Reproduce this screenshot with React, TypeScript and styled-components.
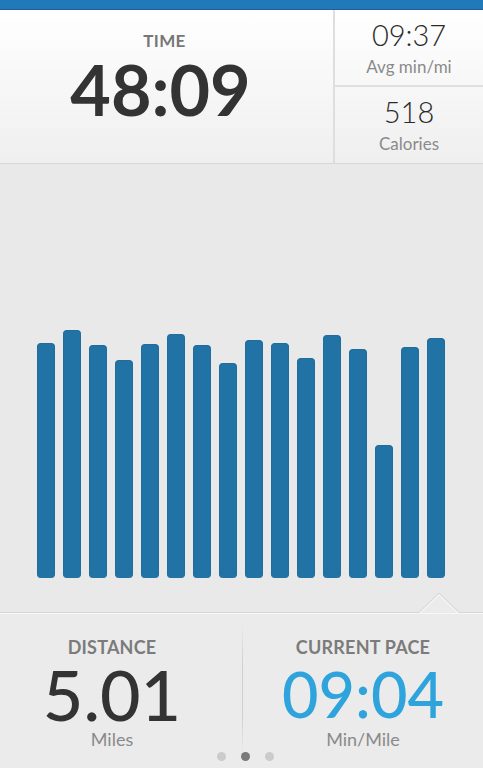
import styled, { createGlobalStyle } from "styled-components"

const GlobalStyle = createGlobalStyle`
    html, body {
        margin: 0;
        padding: 0;
        background: #e9e9e9;
        font-family: Lato, "Open Sans", sans-serif;
    }
    #root {
        width: 483px;
        height: 768px;
        overflow: hidden;
    }
`

const bars = [235, 248, 233, 218, 234, 244, 233, 215, 238, 235, 220, 243, 229, 133, 231, 240]

const Screen = styled.div`
    display: flex;
    flex-direction: column;
    width: 483px;
    height: 768px;
    background: #e9e9e9;
`
const TopStripe = styled.div`
    height: 9px;
    background: #2279b9;
    border-bottom: 1px solid #1b609a;
`
const Header = styled.header`
    display: grid;
    grid-template-columns: 333px 1fr;
    height: 153px;
    background: linear-gradient(#ffffff, #efefef);
    border-bottom: 1px solid #d8d8d8;
`
const TimeBlock = styled.div`
    display: flex;
    flex-direction: column;
    align-items: center;
    padding-top: 22px;
    padding-right: 4px;
`
const SmallLabel = styled.div`
    font-size: 17px;
    font-weight: 700;
    color: #777;
    letter-spacing: 0.3px;
    line-height: 18px;
`
const BigTime = styled.div`
    font-size: 70px;
    font-weight: 700;
    color: #333;
    line-height: 58px;
    margin-top: 10px;
    margin-left: -8px;
`
const SideStats = styled.div`
    display: grid;
    grid-template-rows: 75px 1fr;
    border-left: 2px solid #dedede;
`
const StatCell = styled.div<{ $divided?: boolean }>`
    display: flex;
    flex-direction: column;
    align-items: center;
    justify-content: center;
    gap: 8px;
    border-top: ${(p) => (p.$divided ? "2px solid #e0e0e0" : "none")};
    padding-top: 2px;
`
const StatValue = styled.div`
    font-size: 29px;
    font-weight: 300;
    color: #2a2a2a;
    line-height: 28px;
`
const StatLabel = styled.div`
    font-size: 17px;
    font-weight: 400;
    color: #8a8a8a;
    line-height: 20px;
`
const Chart = styled.div`
    flex: 1;
    display: flex;
    align-items: flex-end;
    gap: 8px;
    padding: 0 0 34px 37px;
`
const Bar = styled.div`
    width: 18px;
    background: #2273a5;
    border: 1px solid #1f6c9d;
    border-bottom-width: 0;
    box-sizing: border-box;
    border-radius: 4px;
`
const Bottom = styled.section`
    position: relative;
    height: 155px;
    display: grid;
    grid-template-columns: 243px 1fr;
    border-top: 1px solid #d6d6d6;
    box-shadow: inset 0 1px 0 #f7f7f7;
    background: #ebebeb;
`
const Notch = styled.svg`
    position: absolute;
    left: 418px;
    top: -21px;
`
const Metric = styled.div<{ $shift?: number }>`
    display: flex;
    flex-direction: column;
    align-items: center;
    padding-top: 24px;
    padding-right: ${(p) => p.$shift ?? 0}px;
`
const MetricLabel = styled.div`
    font-size: 18px;
    font-weight: 700;
    color: #7b7b7b;
    letter-spacing: 0.2px;
    line-height: 20px;
`
const MetricValue = styled.div<{ $accent?: boolean; $size: number }>`
    font-size: ${(p) => p.$size}px;
    font-weight: 500;
    color: ${(p) => (p.$accent ? "#2fa4dc" : "#333")};
    line-height: 58px;
    margin: 8px 0 6px;
`
const MetricUnit = styled.div`
    font-size: 18px;
    color: #8a8a8a;
    line-height: 20px;
`
const Divider = styled.div`
    position: absolute;
    left: 242px;
    top: 12px;
    width: 1px;
    height: 130px;
    background: linear-gradient(rgba(200,200,200,0), #cfcfcf 30%, #cfcfcf 70%, rgba(200,200,200,0));
`
const Dots = styled.div`
    position: absolute;
    left: 0;
    right: 0;
    bottom: 7px;
    display: flex;
    justify-content: center;
    gap: 15px;
    padding-left: 7px;
`
const Dot = styled.span<{ $active?: boolean }>`
    width: 9px;
    height: 9px;
    border-radius: 50%;
    background: ${(p) => (p.$active ? "#7a7a7a" : "#cbcbcb")};
`

export default function App() {
    return (
        <Screen>
            <GlobalStyle />
            <TopStripe />
            <Header>
                <TimeBlock>
                    <SmallLabel>TIME</SmallLabel>
                    <BigTime>48:09</BigTime>
                </TimeBlock>
                <SideStats>
                    <StatCell>
                        <StatValue>09:37</StatValue>
                        <StatLabel>Avg min/mi</StatLabel>
                    </StatCell>
                    <StatCell $divided>
                        <StatValue>518</StatValue>
                        <StatLabel>Calories</StatLabel>
                    </StatCell>
                </SideStats>
            </Header>
            <Chart>
                {bars.map((h, i) => (
                    <Bar key={i} style={{ height: h }} />
                ))}
            </Chart>
            <Bottom>
                <Notch width="42" height="22" viewBox="0 0 42 22">
                    <path d="M0 21 L21 1 L42 21 Z" fill="#ebebeb" />
                    <path d="M0 21 L21 1 L42 21" fill="none" stroke="#d6d6d6" strokeWidth="1" />
                    <path d="M2 21.5 L21 3 L40 21.5" fill="none" stroke="#f7f7f7" strokeWidth="1" />
                </Notch>
                <Metric $shift={19}>
                    <MetricLabel>DISTANCE</MetricLabel>
                    <MetricValue $size={70}>5.01</MetricValue>
                    <MetricUnit>Miles</MetricUnit>
                </Metric>
                <Divider />
                <Metric>
                    <MetricLabel>CURRENT PACE</MetricLabel>
                    <MetricValue $accent $size={63}>09:04</MetricValue>
                    <MetricUnit>Min/Mile</MetricUnit>
                </Metric>
                <Dots>
                    <Dot />
                    <Dot $active />
                    <Dot />
                </Dots>
            </Bottom>
        </Screen>
    )
}
